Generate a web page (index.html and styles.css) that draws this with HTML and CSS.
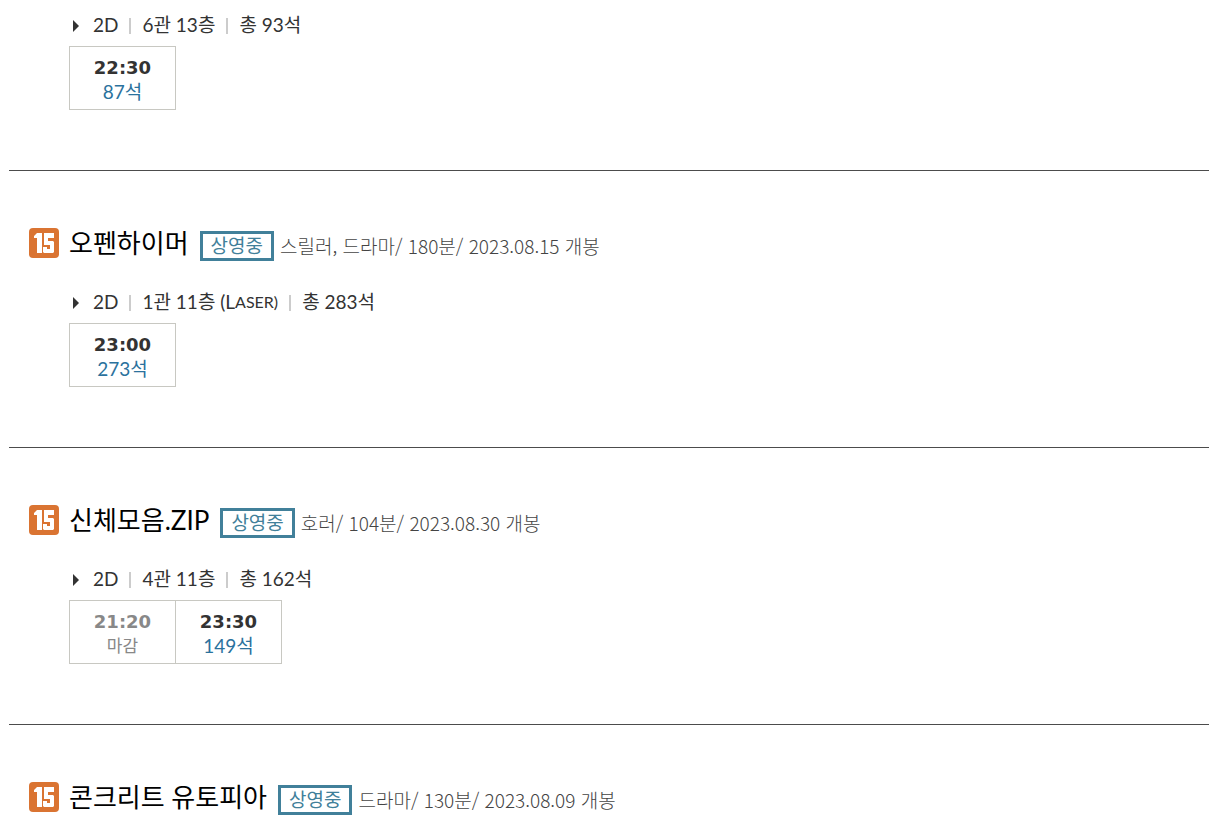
FILE: index.html
```html
<!DOCTYPE html>
<html lang="ko">
<head>
  <meta charset="UTF-8">
  <meta name="viewport" content="width=device-width, initial-scale=1.0">
  <title>상영시간표</title>
  <link rel="stylesheet" href="styles.css">
</head>
<body>
  <svg class="defs" width="0" height="0" aria-hidden="true">
    <symbol id="grade-15" viewBox="0 0 30 30">
      <rect width="30" height="30" rx="4" fill="#da7432"/>
      <path fill="#fff" d="M5 8l3-3h5v20H8V10H5zM15 5h10v5h-6v3h5l1 1v10l-1 1H15l-1-1v-5h4v2h3v-4h-6z"/>
    </symbol>
    <symbol id="arrow" viewBox="0 0 7 12">
      <path fill="#333" d="M1 0l6 6-6 6z"/>
    </symbol>
  </svg>

  <ul class="movie-list">
    <li class="movie">
      <div class="hall">
        <ul class="hall-info">
          <li><svg class="arrow"><use href="#arrow"/></svg>2D</li>
          <li>6관 13층</li>
          <li>총 93석</li>
        </ul>
        <div class="timetable">
          <a href="#" class="time"><em>22:30</em><span>87석</span></a>
        </div>
      </div>
    </li>

    <li class="movie">
      <div class="movie-info">
        <svg class="grade" role="img" aria-label="15"><use href="#grade-15"/></svg>
        <a href="#" class="title">오펜하이머</a>
        <span class="badge">상영중</span>
        <span class="detail">스릴러, 드라마/ 180분/ 2023.08.15 개봉</span>
      </div>
      <div class="hall">
        <ul class="hall-info">
          <li><svg class="arrow"><use href="#arrow"/></svg>2D</li>
          <li>1관 11층 (L<small>ASER)</small></li>
          <li>총 283석</li>
        </ul>
        <div class="timetable">
          <a href="#" class="time"><em>23:00</em><span>273석</span></a>
        </div>
      </div>
    </li>

    <li class="movie">
      <div class="movie-info">
        <svg class="grade" role="img" aria-label="15"><use href="#grade-15"/></svg>
        <a href="#" class="title">신체모음.ZIP</a>
        <span class="badge">상영중</span>
        <span class="detail">호러/ 104분/ 2023.08.30 개봉</span>
      </div>
      <div class="hall">
        <ul class="hall-info">
          <li><svg class="arrow"><use href="#arrow"/></svg>2D</li>
          <li>4관 11층</li>
          <li>총 162석</li>
        </ul>
        <div class="timetable">
          <span class="time closed"><em>21:20</em><span>마감</span></span>
          <a href="#" class="time"><em>23:30</em><span>149석</span></a>
        </div>
      </div>
    </li>

    <li class="movie">
      <div class="movie-info">
        <svg class="grade" role="img" aria-label="15"><use href="#grade-15"/></svg>
        <a href="#" class="title">콘크리트 유토피아</a>
        <span class="badge">상영중</span>
        <span class="detail">드라마/ 130분/ 2023.08.09 개봉</span>
      </div>
    </li>
  </ul>
</body>
</html>
```
FILE: styles.css
```css
body {
  margin: 0 17px 0 9px;
  background: #fff;
  color: #333;
  font-family: Lato, "Noto Sans CJK KR", sans-serif;
  font-size: 19px;
  line-height: 24px;
}

ul {
  list-style: none;
  margin: 0;
  padding: 0;
}

a {
  color: inherit;
  text-decoration: none;
}

.defs {
  position: absolute;
}

/* movie */
.movie {
  padding: 55px 20px 60px;
  border-bottom: 1px solid #4c4c4c;
}

.movie:first-child {
  padding-top: 13px;
}

.movie:last-child {
  padding-bottom: 0;
  border-bottom: 0;
}

.movie-info {
  display: flex;
  align-items: center;
  height: 34px;
  margin-bottom: 30px;
}

.grade {
  width: 30px;
  height: 30px;
  margin-right: 10px;
}

.title {
  margin-right: 11px;
  color: #000;
  font-size: 26px;
}

.badge {
  margin: 5px 6px 0 0;
  padding: 0 8px;
  border: 3px solid #41809a;
  color: #41809a;
}

.detail {
  margin-top: 5px;
  color: #444;
  font-family: "Noto Sans CJK KR", sans-serif;
  font-weight: 300;
}

/* hall and start times */
.hall {
  padding-left: 40px;
}

.hall-info {
  display: flex;
  margin-bottom: 9px;
}

.hall-info li {
  display: flex;
  align-items: center;
  white-space: pre;
}

.hall-info li + li::before {
  content: "";
  width: 2px;
  height: 16px;
  margin: 2px 11px 0;
  background: #ccc;
}

.arrow {
  width: 7px;
  height: 12px;
  margin: 2px 14px 0 3px;
}

.hall-info small {
  font-size: 16px;
}

.timetable {
  display: flex;
}

.time {
  display: flex;
  flex-direction: column;
  align-items: center;
  width: 105px;
  padding: 9px 0 5px;
  border: 1px solid #c8c8c2;
  color: #2b729d;
}

.time + .time {
  margin-left: -1px;
}

.time em {
  color: #333;
  font-family: "DejaVu Sans", sans-serif;
  font-size: 18px;
  font-style: normal;
  font-weight: bold;
}

.closed,
.closed em {
  color: #888;
}

.closed span {
  font-size: 17px;
}
```
